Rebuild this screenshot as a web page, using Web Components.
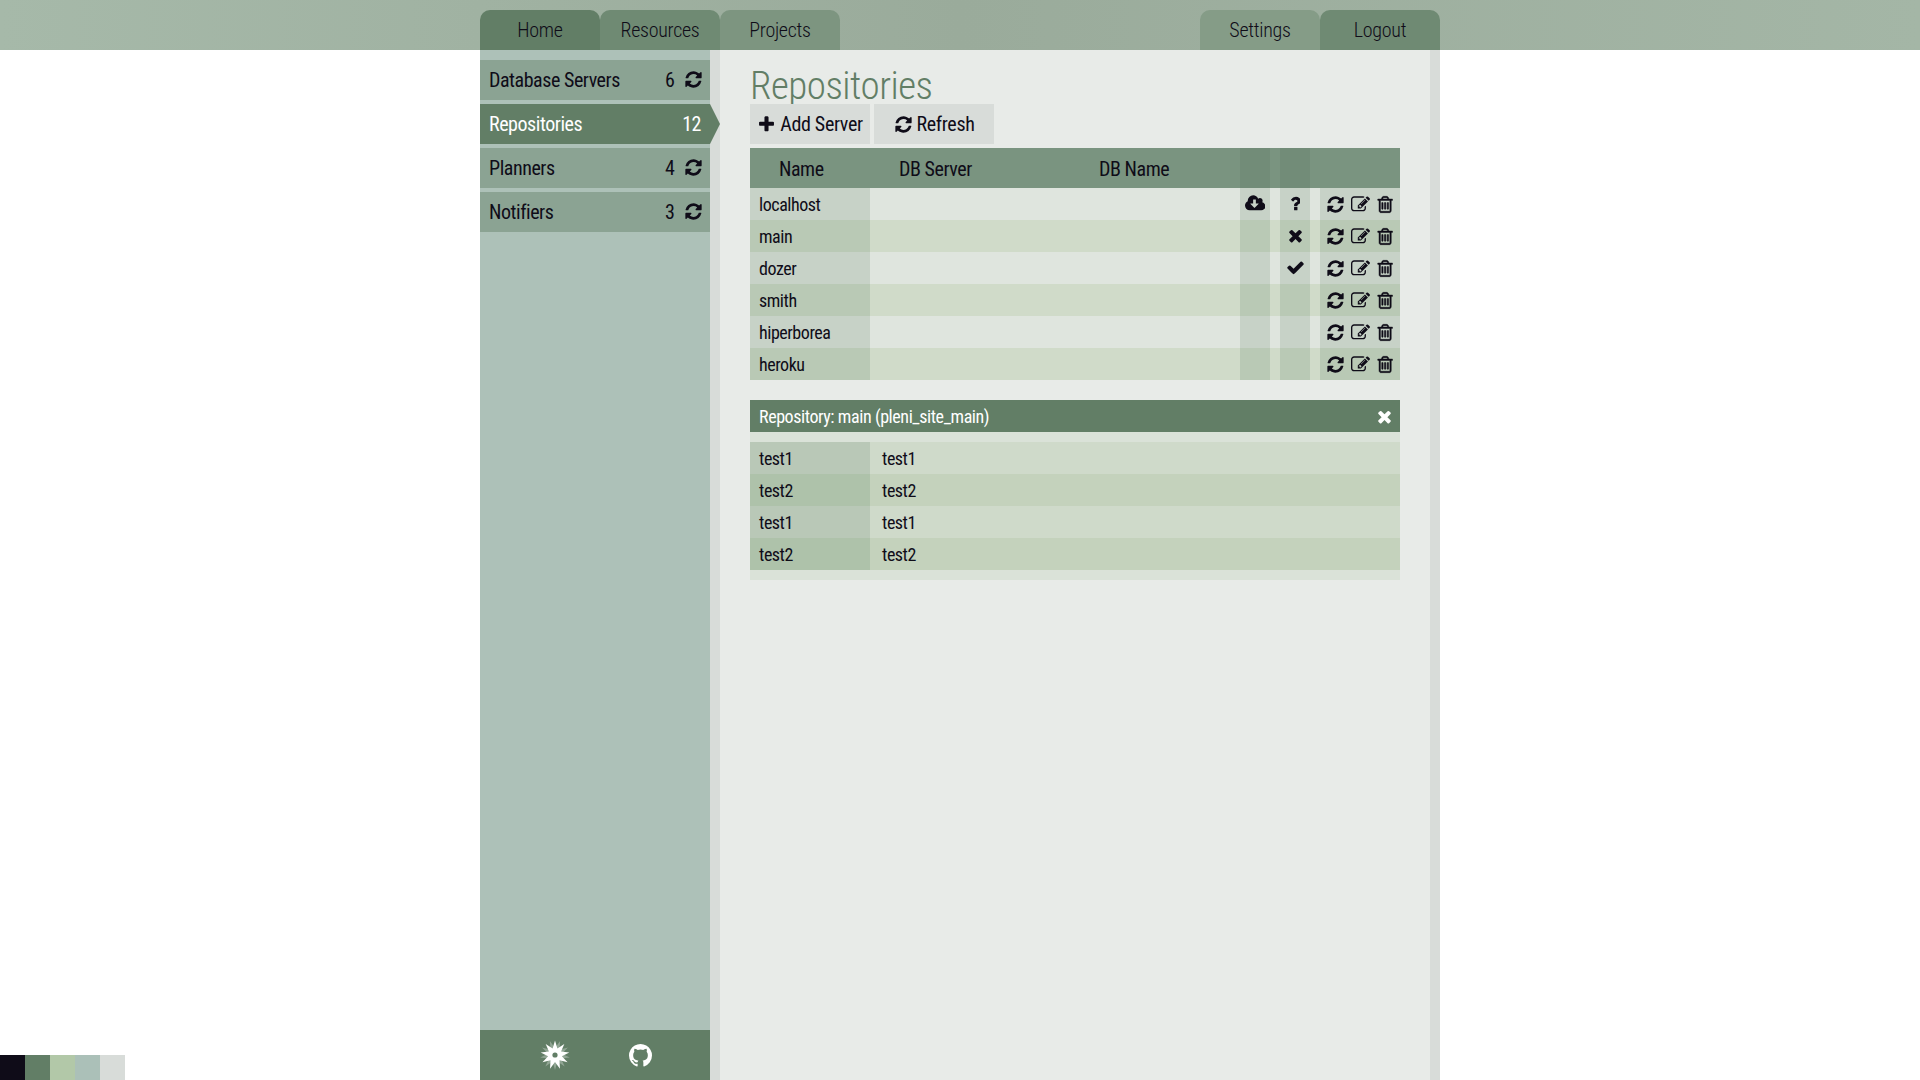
<!DOCTYPE html>
<html>
<head>
<meta charset="utf-8">
<title>Repositories</title>
<style>
    html, body { margin: 0; height: 100%; background: #fff; overflow: hidden; }
    body { font-family: "Roboto Condensed", "Liberation Sans Narrow", "Liberation Sans", sans-serif; color: #0f0c18; }
</style>
</head>
<body>
<app-shell>
    <top-nav slot="nav">
        <nav-tab tone="1">Home</nav-tab>
        <nav-tab tone="2">Resources</nav-tab>
        <nav-tab tone="3">Projects</nav-tab>
        <nav-tab tone="4" slot="right">Settings</nav-tab>
        <nav-tab tone="2" slot="right">Logout</nav-tab>
    </top-nav>
    <side-bar slot="side">
        <side-item count="6" refresh>Database Servers</side-item>
        <side-item count="12" active>Repositories</side-item>
        <side-item count="4" refresh>Planners</side-item>
        <side-item count="3" refresh>Notifiers</side-item>
    </side-bar>
    <main-pane slot="main" heading="Repositories">
        <tool-button icon="plus" slot="tools">Add Server</tool-button>
        <tool-button icon="refresh" slot="tools" wide>Refresh</tool-button>
        <repo-table>
            <repo-row name="localhost" cloud status="question"></repo-row>
            <repo-row name="main" even status="times"></repo-row>
            <repo-row name="dozer" status="check"></repo-row>
            <repo-row name="smith" even></repo-row>
            <repo-row name="hiperborea"></repo-row>
            <repo-row name="heroku" even></repo-row>
        </repo-table>
        <repo-detail heading="Repository: main (pleni_site_main)">
            <detail-row name="test1" value="test1"></detail-row>
            <detail-row name="test2" value="test2" even></detail-row>
            <detail-row name="test1" value="test1"></detail-row>
            <detail-row name="test2" value="test2" even></detail-row>
        </repo-detail>
    </main-pane>
</app-shell>
<colour-swatches></colour-swatches>

<script>
const ICONS = {
    refresh: ["0 0 1792 1792", "M1639 1056q0 5-1 7-64 268-268 434.5t-478 166.5q-146 0-282.5-55t-243.5-157l-129 129q-19 19-45 19t-45-19-19-45v-448q0-26 19-45t45-19h448q26 0 45 19t19 45-19 45l-137 137q71 66 161 102t187 36q134 0 250-65t186-179q11-17 53-117 8-23 30-23h192q13 0 22.5 9.5t9.5 22.5zm25-800v448q0 26-19 45t-45 19h-448q-26 0-45-19t-19-45 19-45l138-138q-148-137-349-137-134 0-250 65t-186 179q-11 17-53 117-8 23-30 23h-199q-13 0-22.5-9.5t-9.5-22.5v-7q65-268 270-434.5t480-166.5q146 0 284 55.5t245 156.5l130-129q19-19 45-19t45 19 19 45z"],
    plus: ["0 0 1792 1792", "M1600 736v192q0 40-28 68t-68 28h-416v416q0 40-28 68t-68 28h-192q-40 0-68-28t-28-68v-416h-416q-40 0-68-28t-28-68v-192q0-40 28-68t68-28h416v-416q0-40 28-68t68-28h192q40 0 68 28t28 68v416h416q40 0 68 28t28 68z"],
    times: ["0 0 1792 1792", "M1490 1322q0 40-28 68l-136 136q-28 28-68 28t-68-28l-294-294-294 294q-28 28-68 28t-68-28l-136-136q-28-28-28-68t28-68l294-294-294-294q-28-28-28-68t28-68l136-136q28-28 68-28t68 28l294 294 294-294q28-28 68-28t68 28l136 136q28 28 28 68t-28 68l-294 294 294 294q28 28 28 68z"],
    check: ["0 0 1792 1792", "M1671 566q0 40-28 68l-724 724-136 136q-28 28-68 28t-68-28l-136-136-362-362q-28-28-28-68t28-68l136-136q28-28 68-28t68 28l294 295 656-657q28-28 68-28t68 28l136 136q28 28 28 68z"],
    question: ["0 0 1024 1792", "M704 1256v240q0 16-12 28t-28 12h-240q-16 0-28-12t-12-28v-240q0-16 12-28t28-12h240q16 0 28 12t12 28zm316-600q0 54-15.5 101t-35 76.5-55 59.5-57.5 43.5-61 35.5q-41 23-68.5 65t-27.5 67q0 17-12 32.5t-28 15.5h-240q-15 0-25.5-18.5t-10.5-37.5v-45q0-83 65-156.5t143-108.5q59-27 84-56t25-76q0-42-46.5-74t-107.5-32q-65 0-108 29-35 25-107 115-13 16-31 16-12 0-25-8l-164-125q-13-10-15.5-25t5.5-28q160-266 464-266 80 0 161 31t146 83 106 127.5 41 158.5z"],
    cloud: ["0 0 1920 1792", "M1280 928q0-14-9-23t-23-9h-224v-352q0-13-9.5-22.5t-22.5-9.5h-192q-13 0-22.5 9.5t-9.5 22.5v352h-224q-13 0-22.5 9.5t-9.5 22.5q0 14 9 23l352 352q9 9 23 9t23-9l351-351q10-12 10-24zm640 224q0 159-112.5 271.5t-271.5 112.5h-1088q-185 0-316.5-131.5t-131.5-316.5q0-130 70-240t188-165q-2-30-2-43 0-212 150-362t362-150q156 0 285.5 87t188.5 231q71-62 166-62 106 0 181 75t75 181q0 76-41 138 130 31 213.5 135.5t83.5 238.5z"],
    edit: ["0 0 1792 1792", "M888 1184l116-116-152-152-116 116v56h96v96h56zm440-720q-16-16-33 1l-350 350q-17 17-1 33t33-1l350-350q17-17 1-33zm80 594v190q0 119-84.5 203.5t-203.5 84.5h-832q-119 0-203.5-84.5t-84.5-203.5v-832q0-119 84.5-203.5t203.5-84.5h832q63 0 117 25 15 7 18 23 3 17-9 29l-49 49q-14 14-32 8-23-6-45-6h-832q-66 0-113 47t-47 113v832q0 66 47 113t113 47h832q66 0 113-47t47-113v-126q0-13 9-22l64-64q15-15 35-7t20 29zm-96-738l288 288-672 672h-288v-288zm444 132l-92 92-288-288 92-92q28-28 68-28t68 28l152 152q28 28 28 68t-28 68z"],
    trash: ["128 0 1536 1792", "M704 736v576q0 14-9 23t-23 9h-64q-14 0-23-9t-9-23v-576q0-14 9-23t23-9h64q14 0 23 9t9 23zm256 0v576q0 14-9 23t-23 9h-64q-14 0-23-9t-9-23v-576q0-14 9-23t23-9h64q14 0 23 9t9 23zm256 0v576q0 14-9 23t-23 9h-64q-14 0-23-9t-9-23v-576q0-14 9-23t23-9h64q14 0 23 9t9 23zm128 724v-948h-896v948q0 22 7 40.5t14.5 27 10.5 8.5h832q3 0 10.5-8.5t14.5-27 7-40.5zm-672-1076h448l-48-117q-7-9-17-11h-317q-10 2-17 11zm928 32v64q0 14-9 23t-23 9h-96v948q0 83-47 143.5t-113 60.5h-832q-66 0-113-58.5t-47-141.5v-952h-96q-14 0-23-9t-9-23v-64q0-14 9-23t23-9h309l70-167q15-37 54-63t79-26h320q40 0 79 26t54 63l70 167h309q14 0 23 9t9 23z"],
    github: ["128 128 1536 1536", "M896 128q209 0 385.5 103t279.5 279.5 103 385.5q0 251-146.5 451.5t-378.5 278.5q-27 5-40-7t-13-30q0-3 .5-76.5t.5-134.5q0-97-52-142 57-6 102.5-18t94-39 81-66.5 53-105 20.5-150.5q0-119-79-206 37-91-8-204-28-9-81 11t-92 44l-38 24q-93-26-192-26t-192 26q-16-11-42.5-27t-83.5-38.5-85-13.5q-45 113-8 204-79 87-79 206 0 85 20.5 150t52.5 105 80.5 67 94 39 102.5 18q-39 36-49 103-21 10-45 15t-57 5-65.5-21.5-55.5-62.5q-19-32-48.5-52t-49.5-24l-20-3q-21 0-29 4.5t-5 11.5 9 14 13 12l7 5q22 10 43.5 38t31.5 51l10 23q13 38 44 63t67 33 69.5 3.5 55.5-3.5l23-4q0 38 .5 88.5t.5 54.5q0 18-13 30t-40 7q-232-78-378.5-278.5t-146.5-451.5q0-209 103-385.5t279.5-279.5 385.5-103z"],
};

function define(name, css, html) {
    customElements.define(name, class extends HTMLElement {
        constructor() {
            super();
            this.attachShadow({mode: "open"});
        }
        connectedCallback() {
            this.shadowRoot.innerHTML = `<style>${css}</style>${typeof html === "function" ? html(this) : html}`;
        }
    });
}

function starPoints(outer, inner, rotate) {
    const points = [];
    for (let i = 0; i < 18; i++) {
        const r = i % 2 ? inner : outer;
        const a = (i * 20 + rotate) * Math.PI / 180;
        points.push(`${(15 + r * Math.sin(a)).toFixed(2)},${(15 - r * Math.cos(a)).toFixed(2)}`);
    }
    return points.join(" ");
}

class FaIcon extends HTMLElement {
    constructor() {
        super();
        this.attachShadow({mode: "open"});
    }
    connectedCallback() {
        const [box, d] = ICONS[this.getAttribute("name")];
        const size = this.getAttribute("size") || 19;
        const [, , w, h] = box.split(" ").map(Number);
        this.shadowRoot.innerHTML = `
            <style>
                :host { display: inline-flex; color: inherit; }
                svg { display: block; fill: currentColor; stroke: currentColor; stroke-width: var(--bold, 0); }
            </style>
            <svg viewBox="${box}" width="${size * w / h}" height="${size}"><path d="${d}"/></svg>`;
    }
}
customElements.define("fa-icon", FaIcon);

define("app-shell", `
    :host { display: grid; grid-template-rows: 50px 1fr; height: 100vh; }
    .body { display: grid; grid-template-columns: 240px 720px; width: 960px; margin: 0 auto; min-height: 0; }
`, `
    <slot name="nav"></slot>
    <div class="body"><slot name="side"></slot><slot name="main"></slot></div>
`);

define("top-nav", `
    :host { display: block; background: linear-gradient(90deg, #a6b9a9 0, #9aab9b 50%, #a4b6a6 100%); }
    nav { display: flex; justify-content: space-between; width: 960px; height: 50px; margin: 0 auto; padding-top: 10px; box-sizing: border-box; }
    div { display: flex; }
`, `<nav><div><slot></slot></div><div><slot name="right"></slot></div></nav>`);

define("nav-tab", `
    :host { display: block; width: 120px; height: 40px; border-radius: 10px 10px 0 0; font-size: 20px; font-weight: 300; letter-spacing: -.3px; line-height: 40px; text-align: center; color: #0f0c18; }
    :host([tone="1"]) { background: #627e66; }
    :host([tone="2"]) { background: #6f8a73; }
    :host([tone="3"]) { background: #7d9580; }
    :host([tone="4"]) { background: #859c87; }
`, `<slot></slot>`);

define("side-bar", `
    :host { display: flex; flex-direction: column; background: #d8dcd9; padding-right: 10px; min-height: 0; }
    .col { flex: 1; display: flex; flex-direction: column; gap: 4px; background: #adc1b8; padding-top: 10px; }
    footer { margin-top: auto; height: 50px; background: #627e66; color: #fff; display: flex; align-items: center; justify-content: center; gap: 59px; padding-left: 2px; }
    .logo { width: 30px; height: 30px; display: block; }
`, `
    <div class="col">
        <slot></slot>
        <footer>
            <svg class="logo" viewBox="0 0 30 30">
                <polygon fill="#fff" fill-opacity=".3" points="${starPoints(15, 7, 20)}"/>
                <polygon fill="#fff" points="${starPoints(14.5, 7, 0)}"/>
                <circle cx="15" cy="15" r="2.6" fill="#627e66"/>
            </svg>
            <fa-icon name="github" size="23"></fa-icon>
        </footer>
    </div>
`);

define("side-item", `
    :host { display: flex; position: relative; align-items: center; height: 40px; padding: 0 9px; background: #8ba393; font-size: 20px; letter-spacing: -.45px; color: #0f0c18; }
    :host([active]) { background: #627e66; color: #fff; }
    :host([active])::after { content: ""; position: absolute; left: 100%; top: 0; width: 10px; height: 40px; background: #627e66; clip-path: polygon(0 0, 100% 50%, 0 100%); }
    .label { flex: 1; }
    fa-icon { margin: -1px -1.5px 0 9px; }
`, (el) => `
    <span class="label"><slot></slot></span><span>${el.getAttribute("count")}</span>
    ${el.hasAttribute("refresh") ? `<fa-icon name="refresh"></fa-icon>` : ""}
`);

define("main-pane", `
    :host { display: block; background: #e8ebe8; border-right: 10px solid #d8dcd9; padding: 0 30px; }
    h1 { margin: 0; height: 54px; line-height: 72px; font-size: 39px; font-weight: 300; letter-spacing: -.5px; color: #627e66; white-space: nowrap; }
    .tools { position: relative; display: flex; gap: 4px; margin-bottom: 4px; }
`, (el) => `
    <h1>${el.getAttribute("heading")}</h1>
    <div class="tools"><slot name="tools"></slot></div>
    <slot></slot>
`);

define("tool-button", `
    :host { display: flex; align-items: center; justify-content: center; gap: 4px; width: 120px; height: 40px; background: #d8dcd9; font-size: 20px; letter-spacing: -.35px; }
`, (el) => `<fa-icon name="${el.getAttribute("icon")}"></fa-icon><slot></slot>`);

const ROW_COLUMNS = "120px 200px 170px 30px 10px 30px 10px 80px";

define("repo-table", `
    :host { display: block; width: 650px; }
    .head { display: grid; grid-template-columns: ${ROW_COLUMNS}; height: 40px; background: #7a9480; font-size: 20px; letter-spacing: -.45px; line-height: 42px; }
    .head span { padding-left: 29px; }
    .head i { background: #728c78; }
`, `
    <div class="head"><span>Name</span><span>DB Server</span><span>DB Name</span><i></i><b></b><i></i><b></b><b></b></div>
    <slot></slot>
`);

define("repo-row", `
    :host { display: grid; grid-template-columns: ${ROW_COLUMNS}; height: 32px; background: #dfe5de; font-size: 18px; letter-spacing: -.45px; --dark: #c7d2c7; }
    :host([even]) { background: #d0dbc9; --dark: #b9c9b5; }
    .name, .c, .tools { background: var(--dark); display: flex; align-items: center; }
    .name { padding-left: 9px; }
    .c { justify-content: center; }
    .c fa-icon { margin-bottom: 2px; }
    .tools { gap: 6.5px; padding-left: 5.5px; }
    fa-icon[name="trash"] { --bold: 45px; }
`, (el) => {
    const status = el.getAttribute("status");
    return `
    <div class="name">${el.getAttribute("name")}</div><div></div><div></div>
    <div class="c">${el.hasAttribute("cloud") ? `<fa-icon name="cloud"></fa-icon>` : ""}</div><div></div>
    <div class="c">${status ? `<fa-icon name="${status}"></fa-icon>` : ""}</div><div></div>
    <div class="tools"><fa-icon name="refresh"></fa-icon><fa-icon name="edit"></fa-icon><fa-icon name="trash"></fa-icon></div>`;
});

define("repo-detail", `
    :host { display: block; width: 650px; margin-top: 20px; background: #dae2d8; padding-bottom: 10px; }
    header { display: flex; justify-content: space-between; align-items: center; height: 32px; padding: 0 6.5px 0 9px; background: #627e66; color: #fff; font-size: 18px; letter-spacing: -.42px; margin-bottom: 10px; }
`, (el) => `
    <header><span>${el.getAttribute("heading")}</span><fa-icon name="times"></fa-icon></header>
    <slot></slot>
`);

define("detail-row", `
    :host { display: grid; grid-template-columns: 120px 1fr; grid-template-rows: 32px; height: 32px; background: #cfdaca; font-size: 18px; letter-spacing: -.45px; line-height: 34px; }
    :host([even]) { background: #c4d2bc; }
    .name { background: #b9c8b7; padding-left: 9px; }
    :host([even]) .name { background: #aec2aa; }
    .value { padding-left: 12px; }
`, (el) => `<div class="name">${el.getAttribute("name")}</div><div class="value">${el.getAttribute("value")}</div>`);

define("colour-swatches", `
    :host { position: fixed; left: 0; bottom: 0; display: flex; }
    i { display: block; width: 25px; height: 25px; }
`, ["#0f0c18", "#627e66", "#b2c8a8", "#abc0b8", "#d8dcd9"].map(c => `<i style="background:${c}"></i>`).join(""));
</script>
</body>
</html>
